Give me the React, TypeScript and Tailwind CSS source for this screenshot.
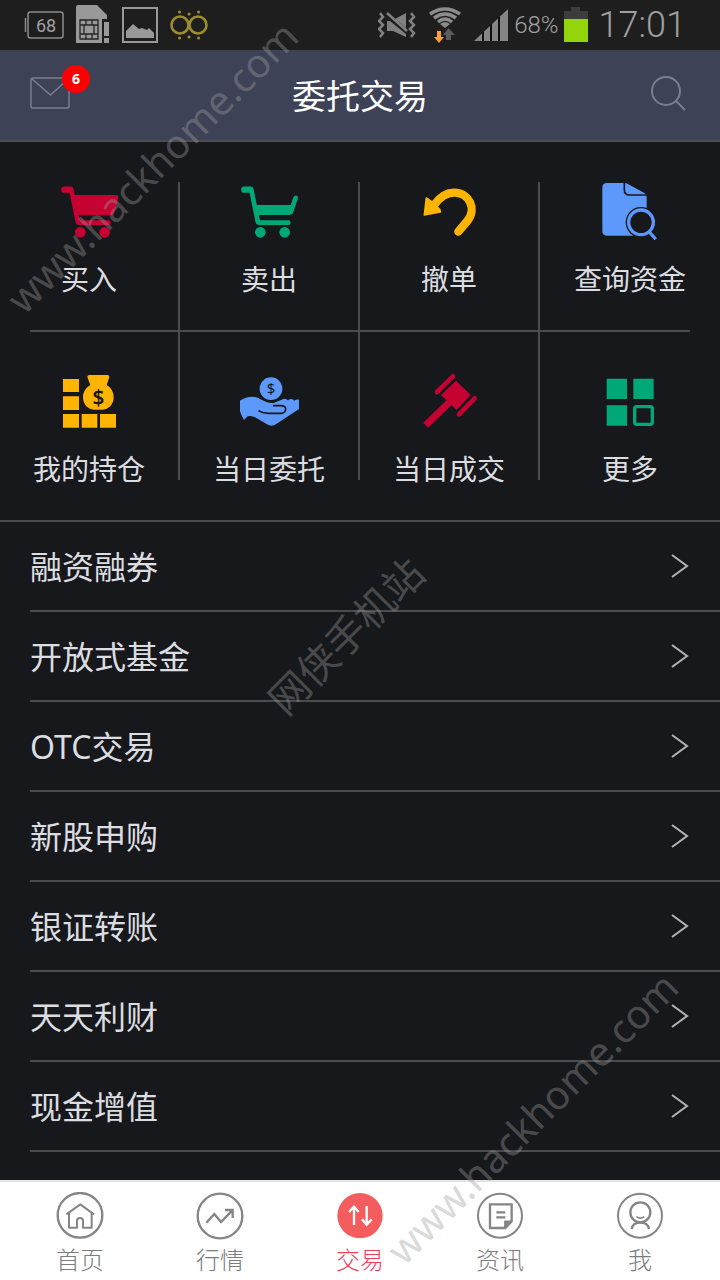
import React from 'react';

interface Entry {
    label: string;
    icon: React.ReactNode;
}

const RED = '#c60233';
const GREEN = '#00a878';
const YELLOW = '#ffb400';
const BLUE = '#5c99fb';
const DARK = '#17181c';

function TileIcon({ children }: { children: React.ReactNode }) {
    return (
        <svg className="h-[60px] w-[60px] shrink-0" viewBox="0 0 180 180" fill="none" aria-hidden="true">
            {children}
        </svg>
    );
}

function CartFrame({ color }: { color: string }) {
    return (
        <>
            <path d="M16 23H32Q37 23 38 28L56 117Q57 122 62 122H148" stroke={color} strokeWidth="14" strokeLinecap="round" strokeLinejoin="round" />
            <path d="M16 23H34" stroke={color} strokeWidth="19" strokeLinecap="round" />
            <circle cx="64" cy="151" r="16" fill={color} />
            <circle cx="137" cy="151" r="16" fill={color} />
        </>
    );
}

const tiles: Entry[][] = [
    [
        {
            label: '买入',
            icon: (
                <TileIcon>
                    <path d="M42 39H172Q179 39 178 47L166 90Q163 99 154 99H52Z" fill={RED} />
                    <CartFrame color={RED} />
                </TileIcon>
            ),
        },
        {
            label: '卖出',
            icon: (
                <TileIcon>
                    <path d="M46 69H155L163 46Q167 38 174 41Q179 44 176 51L163 90Q160 99 150 99H52Z" fill={GREEN} />
                    <CartFrame color={GREEN} />
                </TileIcon>
            ),
        },
        {
            label: '撤单',
            icon: (
                <TileIcon>
                    <path d="M118 149L145 117C175 80 150 32 105 32C83 32 64 44 46 68" stroke={YELLOW} strokeWidth="25" strokeLinecap="round" />
                    <path d="M22 48L34 56L62 82L64 90L16 99Z" fill={YELLOW} stroke={YELLOW} strokeWidth="5" strokeLinejoin="round" />
                </TileIcon>
            ),
        },
        {
            label: '查询资金',
            icon: (
                <TileIcon>
                    <path d="M21 3H78L132 32Q140 36 140 44V161H21Q7 161 7 147V17Q7 3 21 3Z" fill={BLUE} />
                    <path d="M73 2V24Q73 39 89 39H142" stroke={DARK} strokeWidth="5" />
                    <circle cx="123" cy="121" r="46" fill={DARK} />
                    <circle cx="123" cy="121" r="37" stroke={BLUE} strokeWidth="10" />
                    <path d="M148 150L164 168" stroke={BLUE} strokeWidth="10" strokeLinecap="square" />
                </TileIcon>
            ),
        },
    ],
    [
        {
            label: '我的持仓',
            icon: (
                <TileIcon>
                    <path d="M12 21h48v39H12zM12 73h48v41H12zM12 126h48v41H12zM68 126h47v41H68zM123 126h48v41H123z" fill={YELLOW} />
                    <path d="M91 9H145Q153 10 150 18L143 39C158 48 164 62 164 76C164 98 148 113 131 113H105C88 113 72 98 72 76C72 62 79 48 94 39L86 18Q83 10 91 9Z" fill={YELLOW} />
                    <text x="118" y="98" fontSize="62" fontWeight="600" fontFamily="Noto Sans" textAnchor="middle" fill={DARK}>$</text>
                </TileIcon>
            ),
        },
        {
            label: '当日委托',
            icon: (
                <TileIcon>
                    <circle cx="96" cy="50" r="34" fill={BLUE} />
                    <text x="96" y="66" fontSize="45" fontWeight="400" fontFamily="Noto Sans" textAnchor="middle" fill={DARK}>$</text>
                    <path d="M3 86Q20 74 40 74C62 74 78 96 104 93L128 83Q138 77 147 85Q158 77 166 86Q174 80 183 84V109L112 156Q98 166 84 157L52 138Q36 129 26 133L15 144Q6 130 3 118Z" fill={BLUE} />
                    <path d="M60 117Q72 124 90 124H128Q141 121 140 110Q138 100 122 101H104" stroke={DARK} strokeWidth="5" strokeLinecap="round" />
                </TileIcon>
            ),
        },
        {
            label: '当日成交',
            icon: (
                <TileIcon>
                    <path d="M111 26L155 69L113 114L66 69Z" fill={RED} />
                    <path d="M54 60L102 13M120 127L167 79" stroke={RED} strokeWidth="14" strokeLinecap="round" />
                    <path d="M92 90L20 160" stroke={RED} strokeWidth="21" />
                </TileIcon>
            ),
        },
        {
            label: '更多',
            icon: (
                <TileIcon>
                    <path d="M20 20h61v61H20zM100 20h61v61h-61zM20 100h61v61H20z" fill={GREEN} />
                    <rect x="104" y="104" width="53" height="53" rx="6" stroke={GREEN} strokeWidth="10" />
                </TileIcon>
            ),
        },
    ],
];

const menu = ['融资融券', '开放式基金', 'OTC交易', '新股申购', '银证转账', '天天利财', '现金增值'];

function NavIcon({ children }: { children: React.ReactNode }) {
    return (
        <svg className="h-12 w-12" viewBox="0 0 144 144" fill="none" stroke="#858585" strokeWidth="7" aria-hidden="true">
            {children}
        </svg>
    );
}

const tabs: (Entry & { active?: boolean })[] = [
    {
        label: '首页',
        icon: (
            <NavIcon>
                <circle cx="72" cy="70" r="67" />
                <path d="M31 67L73 37L114 67M39 64V107H63V86Q63 78 72 78Q81 78 81 86V107H107V64" strokeWidth="6" strokeLinejoin="round" />
            </NavIcon>
        ),
    },
    {
        label: '行情',
        icon: (
            <NavIcon>
                <circle cx="72" cy="72" r="67" />
                <path d="M31 92L55 66L75 90L109 55M87 54H110V78" />
            </NavIcon>
        ),
    },
    {
        label: '交易',
        active: true,
        icon: (
            <NavIcon>
                <circle cx="72" cy="71" r="68" fill="#f45d5d" stroke="none" />
                <path d="M54 99V45M39 60L54 44L68 60M92 42V97M78 82L92 98L107 82" stroke="#fff" />
            </NavIcon>
        ),
    },
    {
        label: '资讯',
        icon: (
            <NavIcon>
                <circle cx="72" cy="71" r="66" strokeWidth="6" />
                <path d="M42 37H107V88L88 108H42ZM61 61H88M61 76H88" />
                <path d="M86 106V87H107Z" fill="#858585" strokeWidth="3" />
            </NavIcon>
        ),
    },
    {
        label: '我',
        icon: (
            <NavIcon>
                <circle cx="72" cy="71" r="66" strokeWidth="6" />
                <circle cx="73" cy="61" r="30" />
                <path d="M61 74Q73 83 85 74" strokeWidth="5" />
                <path d="M47 111Q50 92 73 92Q96 92 99 111" />
            </NavIcon>
        ),
    },
];

function StatusBar() {
    return (
        <div className="flex h-[50px] items-center bg-[#1e1e1e] pr-[34px] pl-6 font-['Roboto',sans-serif] font-light text-[#a0a0a0]">
            <div className="flex items-center gap-3">
                <svg className="h-10 w-10" viewBox="0 0 40 40" fill="none" stroke="#8c8c8c">
                    <path d="M1.500 13v14" strokeWidth="1.500" />
                    <rect x="4" y="7" width="35" height="26" rx="2.500" strokeWidth="1.500" />
                    <text x="22" y="27" fontSize="18" textAnchor="middle" fill="#a0a0a0" stroke="none" fontWeight="400">68</text>
                </svg>
                <svg className="h-10 w-[34px]" viewBox="0 0 34 40" fill="#999">
                    <path d="M2 0H21L31 10V14H26V38H0V2Q0 0 2 0ZM28 17H33V31H28ZM28 33H33V38H28Z" />
                    <path d="M4 15H22V34H4ZM8 20H18V29H8ZM4 20H8M4 29H8M18 20H22M18 29H22M10 15V20M16 15V20M10 29V34M16 29V34" fill="none" stroke="#252525" strokeWidth="1.300" />
                </svg>
                <svg className="h-9 w-9" viewBox="0 0 36 36" fill="none" stroke="#999">
                    <rect x="1" y="1" width="34" height="34" strokeWidth="2" />
                    <path d="M4 31V24L11 17L17 22L20 21L25 23L27 21L32 26V31Z" fill="#999" stroke="none" />
                </svg>
                <svg className="h-9 w-[38px]" viewBox="0 0 38 36" fill="none" stroke="#9b8c2f">
                    <circle cx="10" cy="18" r="8.500" strokeWidth="2.600" />
                    <circle cx="28" cy="18" r="8.500" strokeWidth="2.600" />
                    <path d="M9.500 5h.1M19 7h.1M28.500 5h.1M9.500 31h.1M19 30h.1M28.500 31h.1" strokeWidth="3" strokeLinecap="round" />
                </svg>
            </div>
            <div className="ml-auto flex items-center">
                <svg className="h-7 w-[38px]" viewBox="0 0 38 28" fill="#808080">
                    <path d="M9 10V20H15L28 26V23L12 10ZM17 8L28 2V17Z" />
                    <path d="M9 2L29 20" fill="none" stroke="#808080" strokeWidth="2.500" />
                    <path d="M2 2L5 6L1 10L5 14L1 18L5 22L2 26M33 2L36 6L32 10L36 14L32 18L36 22L33 26" fill="none" stroke="#808080" strokeWidth="2.500" />
                </svg>
                <svg className="ml-3 h-9 w-[34px]" viewBox="0 0 34 36" fill="none" stroke="#8c8c8c">
                    <path d="M2 7Q17 -3 32 7M6 11Q17 3 28 11M10 15Q17 9 24 15" strokeWidth="3.500" />
                    <path d="M12 17Q17 13 22 17L17 21Z" fill="#8c8c8c" stroke="none" />
                    <path d="M9 24H13V30H16L11 36L6 30H9Z" fill="#f9a030" stroke="none" />
                    <path d="M18 33V28H15L20.500 21L27 28H23V33Z" fill="#5c5c5c" stroke="none" />
                </svg>
                <svg className="ml-3 h-8 w-[34px]" viewBox="0 0 34 32">
                    <path d="M0 32L34 0V32Z" fill="#858585" />
                    <path d="M9 23V32M17 15V32M25 8V32" stroke="#101010" strokeWidth="2" />
                </svg>
                <span className="ml-1.5 text-2xl">68%</span>
                <svg className="ml-[5px] h-9 w-6" viewBox="0 0 24 36">
                    <path d="M7 0H16V4H24V13H0V4H7Z" fill="#3c3c3c" />
                    <path d="M0 12H24V35H0Z" fill="#93d50a" />
                </svg>
                <span className="ml-[11px] text-[36px]">17:01</span>
            </div>
        </div>
    );
}

export default function App() {
    return (
        <div className="relative flex min-h-screen flex-col overflow-hidden bg-[#17181c] font-['Noto_Sans','Noto_Sans_CJK_SC',sans-serif] text-[#dcdde0]">
            <StatusBar />

            <header className="flex h-[92px] items-center justify-between border-b-2 border-[#4b4c50] bg-[#3e4257] px-[30px] pb-1">
                <button className="relative" aria-label="消息">
                    <svg className="h-8 w-10" viewBox="0 0 40 32" fill="none" stroke="#7b7e8d" strokeWidth="1.500">
                        <rect x="1" y="1" width="38" height="30" rx="2" />
                        <path d="M2 2L20.500 18L38 2" />
                    </svg>
                    <span className="absolute -top-3 left-8 flex h-7 w-7 items-center justify-center rounded-full bg-[#ff0000] text-sm font-bold text-white">6</span>
                </button>
                <h1 className="pt-1.5 text-[34px] leading-10 text-white">委托交易</h1>
                <button aria-label="搜索">
                    <svg className="h-9 w-10" viewBox="0 0 40 36" fill="none" stroke="#7b7e8d" strokeWidth="2">
                        <circle cx="16" cy="16" r="14" />
                        <path d="M26 26L35 35" />
                    </svg>
                </button>
            </header>

            {/* Trading shortcuts */}
            <section className="border-b-2 border-[#4b4c50] py-10">
                <div className="grid grid-cols-4">
                    {tiles[0].map(tile => (
                        <button key={tile.label} className="flex h-[148px] flex-col items-center border-r-2 border-[#4b4c50] last:border-r-0">
                            {tile.icon}
                            <span className="mt-5 text-[28px] leading-[34px]">{tile.label}</span>
                        </button>
                    ))}
                </div>
                <div className="mx-[30px] h-0.5 bg-[#4b4c50]" />
                <div className="grid grid-cols-4">
                    {tiles[1].map(tile => (
                        <button key={tile.label} className="flex h-[148px] flex-col items-center border-r-2 border-[#4b4c50] pt-10 last:border-r-0">
                            {tile.icon}
                            <span className="mt-5 text-[28px] leading-[34px]">{tile.label}</span>
                        </button>
                    ))}
                </div>
            </section>

            <ul className="flex-1 pb-7 pl-[30px]">
                {menu.map(item => (
                    <li key={item} className="border-b-2 border-[#4b4c50]">
                        <a href="#" className="flex h-[88px] items-center justify-between pr-[31px] text-[32px] leading-10">
                            <span className="pt-0.5">{item}</span>
                            <svg className="h-6 w-[18px]" viewBox="0 0 18 24" fill="none" stroke="#b4b5b8" strokeWidth="2">
                                <path d="M1 1L16 12L1 23" />
                            </svg>
                        </a>
                    </li>
                ))}
            </ul>

            {/* Bottom tabs */}
            <nav className="grid grid-cols-5 border-t-2 border-[#e4e4e7] bg-white px-2.5 pt-2.5 pb-2">
                {tabs.map(tab => (
                    <a key={tab.label} href="#" className={`flex flex-col items-center gap-2 text-2xl leading-6 font-light ${tab.active ? 'text-[#e93f5b]' : 'text-[#7c7c7c]'}`}>
                        {tab.icon}
                        <span>{tab.label}</span>
                    </a>
                ))}
            </nav>

            {/* Watermarks */}
            <div className="pointer-events-none absolute inset-0 text-[40px] leading-none whitespace-nowrap text-[#9d9d9d]/40">
                <span className="absolute top-[167px] left-[152px] -translate-x-1/2 -translate-y-1/2 -rotate-45">www.hackhome.com</span>
                <span className="absolute top-[636px] left-[346px] -translate-x-1/2 -translate-y-1/2 -rotate-45">网侠手机站</span>
                <span className="absolute top-[1118px] left-[532px] -translate-x-1/2 -translate-y-1/2 -rotate-45">www.hackhome.com</span>
            </div>
        </div>
    );
}
